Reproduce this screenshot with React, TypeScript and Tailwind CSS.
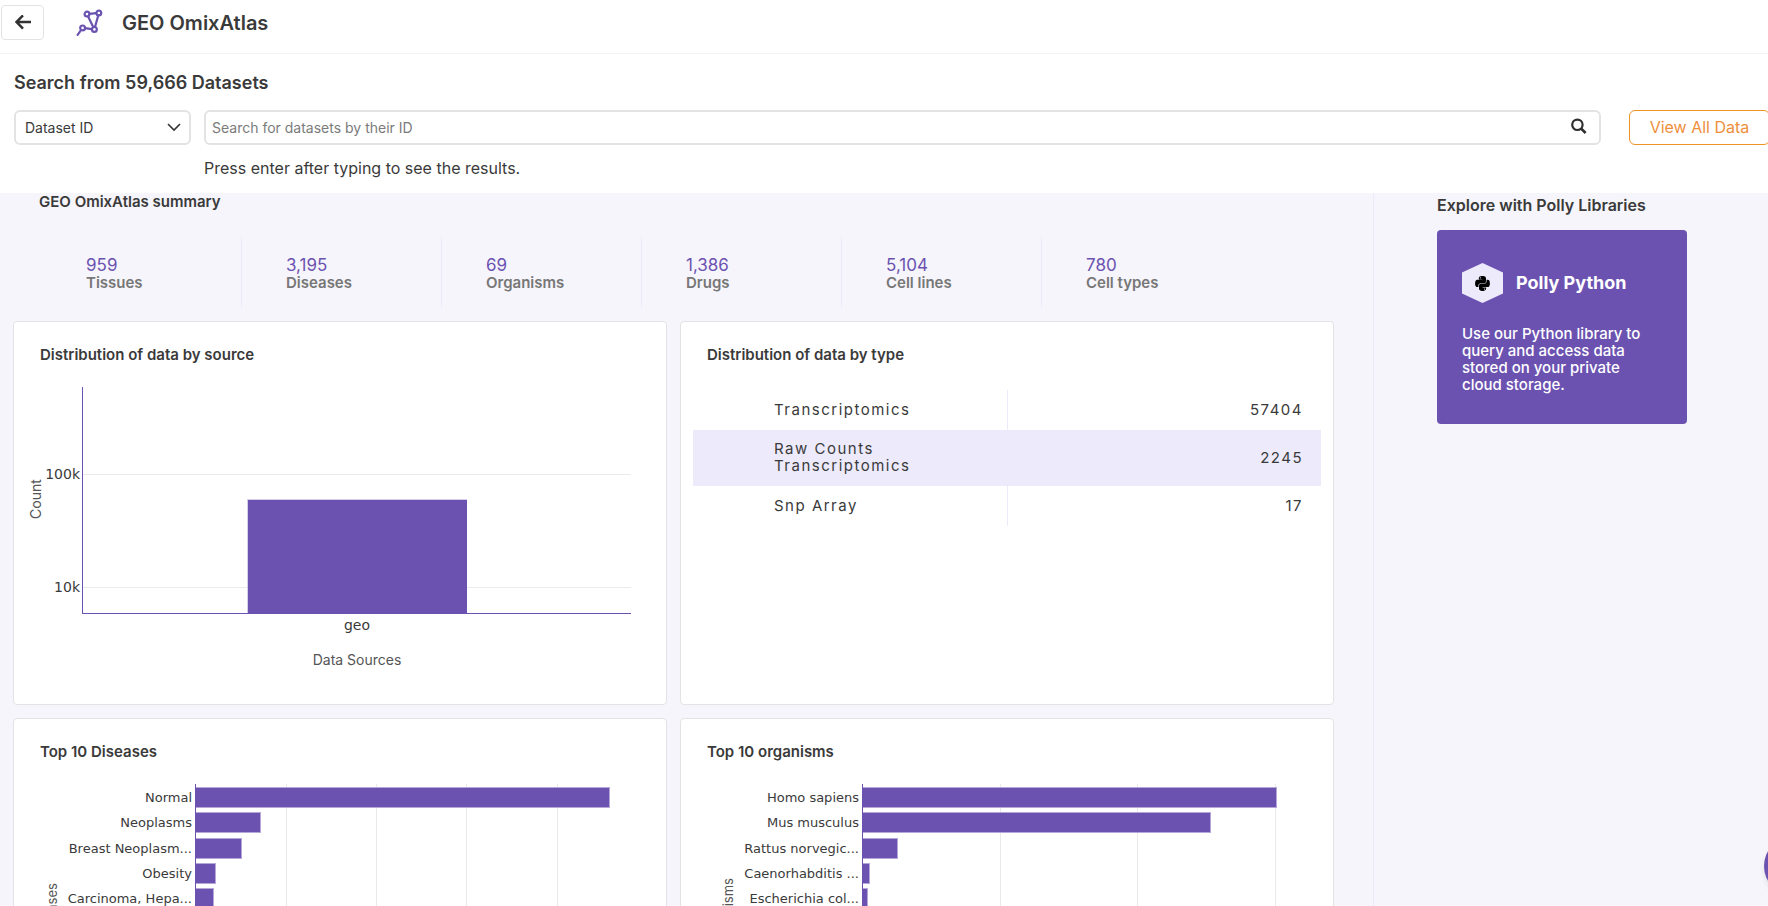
import { FaPython } from "react-icons/fa";

const stats = [
  { value: "959", label: "Tissues" },
  { value: "3,195", label: "Diseases" },
  { value: "69", label: "Organisms" },
  { value: "1,386", label: "Drugs" },
  { value: "5,104", label: "Cell lines" },
  { value: "780", label: "Cell types" },
];

const types = [
  { name: "Transcriptomics", count: 57404 },
  { name: "Raw Counts Transcriptomics", count: 2245 },
  { name: "Snp Array", count: 17 },
];

type Bar = { label: string; width: number };

const diseases: Bar[] = [
  { label: "Normal", width: 415 },
  { label: "Neoplasms", width: 66 },
  { label: "Breast Neoplasm...", width: 47 },
  { label: "Obesity", width: 21 },
  { label: "Carcinoma, Hepa...", width: 19 },
];

const organisms: Bar[] = [
  { label: "Homo sapiens", width: 415 },
  { label: "Mus musculus", width: 349 },
  { label: "Rattus norvegic...", width: 36 },
  { label: "Caenorhabditis ...", width: 8 },
  { label: "Escherichia col...", width: 6 },
];

function OmixLogo() {
  return (
    <svg className="h-7 w-7" viewBox="0 0 28 28" fill="none" stroke="#6b52b1" strokeWidth="2.2" strokeLinecap="round" aria-hidden="true">
      <path d="M13.5 4.8 20.2 4.2M12.1 7.5 17.2 18M22.2 6.6 19 18M15.7 20.1 9.2 19.2M5 21.2 1.6 25.8" />
      <circle cx="11" cy="5.1" r="2.4" />
      <circle cx="22.8" cy="4" r="2.4" />
      <circle cx="18.4" cy="20.4" r="2.4" />
      <circle cx="6.6" cy="18.9" r="2.4" />
    </svg>
  );
}

function Card({ title, children }: { title: string; children: React.ReactNode }) {
  return (
    <section className="h-[384px] rounded border border-[#e3e3e3] bg-white pt-[23px]">
      <h3 className="pl-[26px] text-[15px] leading-5 font-semibold">{title}</h3>
      {children}
    </section>
  );
}

function SourceChart() {
  return (
    <svg className="mt-[15px] w-full" viewBox="0 0 652 300" role="img" aria-label="Distribution of data by source">
      <g shapeRendering="crispEdges">
        <rect x="69" y="94" width="548" height="1" fill="#ebebeb" />
        <rect x="69" y="207" width="548" height="1" fill="#ebebeb" />
        <rect x="233" y="119" width="220" height="114" fill="#d5cde9" />
        <rect x="234" y="120" width="219" height="113" fill="#6b52b1" />
        <rect x="68" y="7" width="1" height="227" fill="#6b52b1" />
        <rect x="68" y="233" width="549" height="1" fill="#6b52b1" />
      </g>
      <g className="fill-[#3a3a3a] font-['DejaVu_Sans',sans-serif] text-sm">
        <text x="66" y="99" textAnchor="end">100k</text>
        <text x="66" y="212" textAnchor="end">10k</text>
        <text x="343" y="250" textAnchor="middle">geo</text>
      </g>
      <g className="fill-[#555555] text-sm">
        <text x="343" y="285" textAnchor="middle">Data Sources</text>
        <text transform="translate(27 119) rotate(-90)" textAnchor="middle">Count</text>
      </g>
    </svg>
  );
}

function RankChart({ bars, grid, axis, axisX }: { bars: Bar[]; grid: number[]; axis: string; axisX: number }) {
  return (
    <svg className="mt-[15px] w-full" viewBox="0 0 652 300" role="img" aria-label={axis}>
      <g shapeRendering="crispEdges">
        {grid.map((x) => (
          <rect key={x} x={x} y="7" width="1" height="253" fill="#e9e9e9" />
        ))}
        {bars.map((bar, i) => (
          <g key={bar.label}>
            <rect x="181" y={10 + Math.round(i * 25.3)} width={bar.width} height="21" fill="#b5a8d8" />
            <rect x="181" y={11 + Math.round(i * 25.3)} width={bar.width - 1} height="19" fill="#6b52b1" />
          </g>
        ))}
        <rect x="181" y="7" width="1" height="253" fill="#6b52b1" />
      </g>
      <g className="fill-[#3a3a3a] font-['DejaVu_Sans',sans-serif] text-[13px]">
        {bars.map((bar, i) => (
          <text key={bar.label} x="178" y={25 + Math.round(i * 25.3)} textAnchor="end">
            {bar.label}
          </text>
        ))}
      </g>
      <text className="fill-[#555555] text-[13px]" transform={`translate(${axisX} 134) rotate(-90)`} textAnchor="middle">
        {axis}
      </text>
    </svg>
  );
}

export default function App() {
  return (
    <div className="flex h-screen flex-col overflow-hidden bg-white font-['Inter',sans-serif] text-[#3a3a3a]">
      <header className="flex h-[54px] shrink-0 items-center border-b border-[#f3f3f3] pb-2 pl-px">
        <button type="button" aria-label="Back" className="flex h-[35px] w-[43px] items-center justify-center rounded border border-[#e3e3e3] bg-white">
          <svg className="h-4 w-4" viewBox="0 0 16 16" fill="none" stroke="#333333" strokeWidth="2.5" aria-hidden="true">
            <path d="M8 0.4 1.4 7 8 13.6M1.6 7H16" />
          </svg>
        </button>
        <div className="ml-8 flex items-center gap-[18px]">
          <OmixLogo />
          <h1 className="text-xl font-semibold">GEO OmixAtlas</h1>
        </div>
      </header>

      <section className="shrink-0 pt-[17px] pb-[13px] pl-[14px]">
        <h2 className="text-lg leading-6 font-semibold">Search from 59,666 Datasets</h2>
        <div className="mt-[15px] flex h-[35px]">
          <div className="relative w-[177px] shrink-0">
            <select aria-label="Search by" className="h-full w-full appearance-none rounded-md border-2 border-[#e3e3e3] bg-white pl-[9px] text-sm">
              <option>Dataset ID</option>
            </select>
            <svg className="pointer-events-none absolute top-3 right-2.5 h-2.5 w-3.5" viewBox="0 0 14 10" fill="none" stroke="#333333" strokeWidth="1.6" aria-hidden="true">
              <path d="M1 2 7 8 13 2" />
            </svg>
          </div>
          <div className="relative ml-[13px] min-w-0 flex-1">
            <input
              type="text"
              aria-label="Search for datasets by their ID"
              placeholder="Search for datasets by their ID"
              className="h-full w-full rounded-md border-2 border-[#e3e3e3] bg-white pr-12 pl-1.5 text-sm placeholder:text-[#7b7b7b]"
            />
            <button type="button" aria-label="Search" className="absolute top-0 right-3.5 flex h-8 items-center">
              <svg className="h-4 w-4" viewBox="0 0 16 16" fill="none" stroke="#2f2f2f" aria-hidden="true">
                <circle cx="6.4" cy="6.8" r="5.2" strokeWidth="2.2" />
                <path d="M10.2 10.6 14.6 15" strokeWidth="2.7" />
              </svg>
            </button>
          </div>
          <button type="button" className="-mr-0.5 ml-7 w-[141px] shrink-0 rounded-md border border-[#ee9426] bg-white pb-0.5 text-base leading-6 text-[#ee8f3c]">
            View All Data
          </button>
        </div>
        <p className="mt-[11px] ml-[190px] text-base leading-6">Press enter after typing to see the results.</p>
      </section>

      <div className="flex min-h-0 flex-1 overflow-hidden bg-[#f6f5fb]">
        <main className="min-w-0 flex-1 pr-[39px] pl-[13px]">
          <h2 className="pl-[26px] text-[15px] leading-[18px] font-semibold">GEO OmixAtlas summary</h2>
          <dl className="mt-[26px] flex pl-[29px]">
            {stats.map((s) => (
              <div key={s.label} className="flex h-[71px] w-[200px] flex-col-reverse justify-end border-r border-[#eceafb] pt-[19px] pl-[44px] last:border-r-0">
                <dt className="text-[15px] leading-[18px] font-semibold text-[#777777]">{s.label}</dt>
                <dd className="text-[17px] leading-[18px] text-[#6b52b1]">{s.value}</dd>
              </div>
            ))}
          </dl>
          <div className="mt-[13px] grid grid-cols-2 gap-[13px]">
            <Card title="Distribution of data by source">
              <SourceChart />
            </Card>
            <Card title="Distribution of data by type">
              <div className="mt-[25px] px-3">
                <table className="w-full table-fixed text-[15px] leading-[17px] tracking-widest">
                  <tbody>
                    {types.map((t) => (
                      <tr key={t.name} className="h-10 even:bg-[#eceafb]">
                        <td className="border-r border-[#eceafb] pt-2.5 pr-16 pb-3 pl-[81px]">{t.name}</td>
                        <td className="pt-2.5 pr-[18px] pb-3 text-right">{t.count}</td>
                      </tr>
                    ))}
                  </tbody>
                </table>
              </div>
            </Card>
            <Card title="Top 10 Diseases">
              <RankChart bars={diseases} grid={[272, 362, 452, 543]} axis="Diseases" axisX={43} />
            </Card>
            <Card title="Top 10 organisms">
              <RankChart bars={organisms} grid={[319, 456, 594]} axis="Organisms" axisX={52} />
            </Card>
          </div>
        </main>

        <aside className="w-[395px] shrink-0 border-l border-[#eceafb] pt-1 pl-[63px]">
          <h2 className="text-base leading-4 font-semibold">Explore with Polly Libraries</h2>
          <a href="#polly-python" className="mt-[17px] block h-[194px] w-[250px] rounded bg-[#6b52b1] pt-[33px] pr-8 pl-[25px] text-white">
            <span className="flex items-center gap-[13px]">
              <span className="relative flex h-10 w-[41px] items-center justify-center">
                <svg className="absolute inset-0 h-full w-full" viewBox="0 0 41 40" fill="#eceafb" aria-hidden="true">
                  <path d="M20.5 0 41 9.5V30.5L20.5 40 0 30.5V9.5Z" />
                </svg>
                <FaPython className="relative h-[17px] w-[17px] text-black" />
              </span>
              <span className="text-lg font-bold">Polly Python</span>
            </span>
            <span className="mt-[22px] block text-[15px] leading-[17px] font-medium">
              Use our Python library to query and access data stored on your private cloud storage.
            </span>
          </a>
        </aside>
      </div>

      <button type="button" aria-label="Open help chat" className="fixed -right-14 bottom-2.5 h-[60px] w-[60px] rounded-full bg-[#6b52b1] shadow-md" />
    </div>
  );
}
